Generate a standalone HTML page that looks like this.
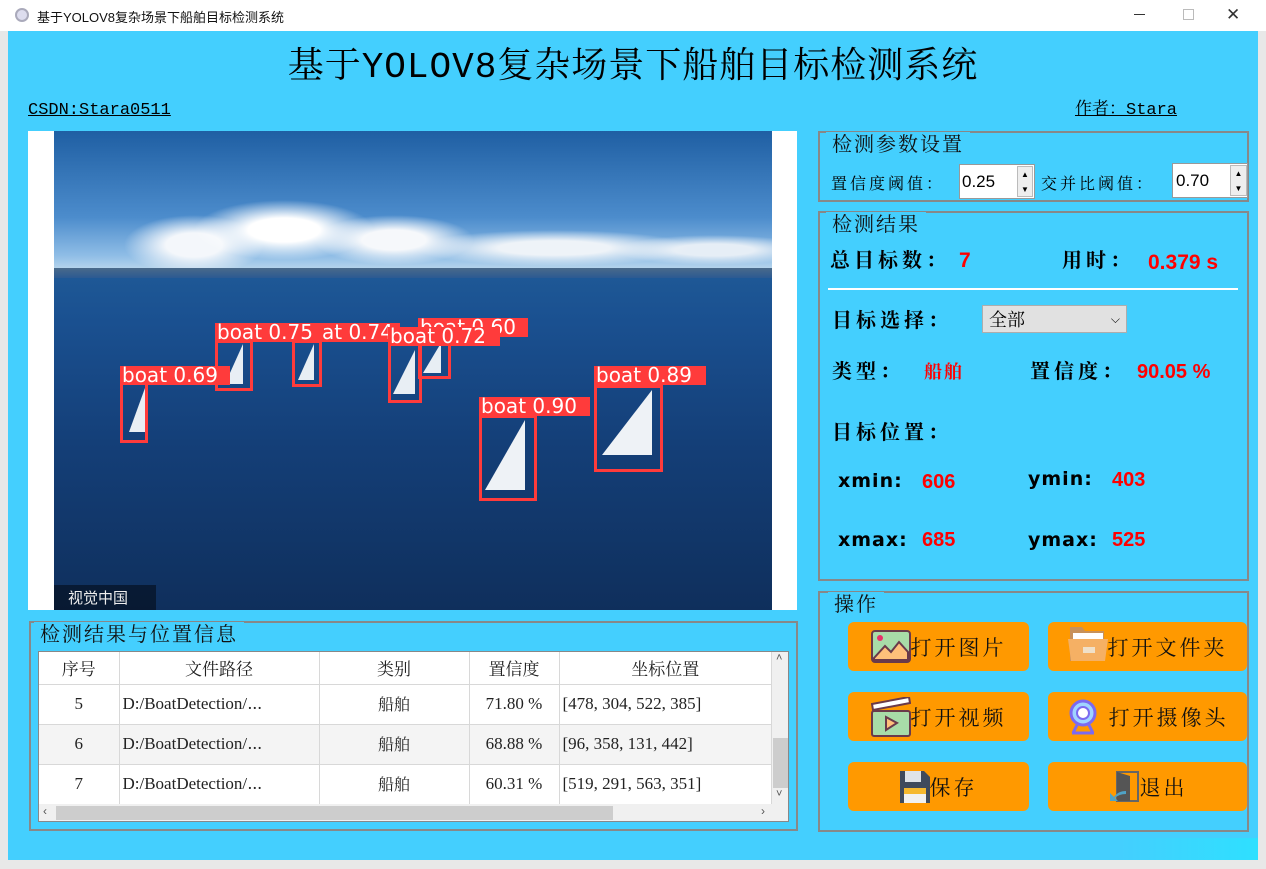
<!DOCTYPE html>
<html><head><meta charset="utf-8"><style>
*{margin:0;padding:0;box-sizing:border-box}
body{width:1266px;height:869px;position:relative;overflow:hidden;background:#e8e8e8;font-family:"Liberation Sans","Noto Serif CJK SC",serif}
.a{position:absolute}
.cj{font-family:"Noto Serif CJK SC","WenQuanYi Zen Hei",serif}
.gb{position:absolute;border:2px solid #888}
.gt{position:absolute;background:#44cffe;padding:0 6px;font-size:20px;line-height:22px;color:#111;letter-spacing:2px}
.btn{position:absolute;background:#ff9900;border-radius:6px;display:flex;align-items:center;justify-content:center;font-size:21px;letter-spacing:3px;color:#111}
.red{color:#ff0000;font-family:"Liberation Sans",sans-serif;font-weight:bold}
.lb{position:absolute;background:#ff3b3b;color:#fff;font:20px "DejaVu Sans",sans-serif;line-height:19px;padding-left:2px;white-space:nowrap;overflow:hidden}
.bx{position:absolute;border:3px solid #ff3b3b}
table{border-collapse:collapse;font-family:"Liberation Serif","Noto Serif CJK SC",serif;font-size:17px;color:#222;table-layout:fixed}
td{border:1px solid #d8d8d8;height:40px;text-align:center;line-height:20px;padding:0;overflow:hidden;white-space:nowrap}
</style></head><body>
<div class="a" style="left:0;top:0;width:1266px;height:31px;background:#fff"></div>
<div class="a" style="left:15px;top:8px;width:14px;height:14px;border-radius:50%;border:2px solid #aab;background:#dde"></div>
<div class="a" style="left:37px;top:7px;font-size:13px;color:#111;font-family:'Liberation Sans','Noto Sans CJK SC',sans-serif">基于YOLOV8复杂场景下船舶目标检测系统</div>
<div class="a" style="left:1134px;top:14px;width:11px;height:1px;background:#333"></div>
<div class="a" style="left:1183px;top:9px;width:11px;height:11px;border:1px solid #bbb"></div>
<div class="a" style="left:1226px;top:5px;font-size:17px;color:#333">✕</div>
<div class="a" style="left:8px;top:31px;width:1250px;height:829px;background:#44cffe"></div>
<div class="a cj" style="left:0;width:1266px;top:44px;text-align:center;font-size:36px;line-height:48px;color:#000;font-family:'Liberation Mono','Noto Serif CJK SC',serif;letter-spacing:1px">基于YOLOV8复杂场景下船舶目标检测系统</div>
<div class="a" style="left:28px;top:101px;font:17px 'Liberation Mono',monospace;line-height:20px;text-decoration:underline;color:#000">CSDN:Stara0511</div>
<div class="a" style="left:1075px;top:101px;font:17px 'Liberation Mono','Noto Serif CJK SC',monospace;line-height:20px;text-decoration:underline;color:#000">作者：Stara</div>
<div class="a" style="left:28px;top:131px;width:769px;height:479px;background:#fff"></div>
<div class="a" style="left:54px;top:131px;width:718px;height:479px;background:linear-gradient(#1f5fa3 0%,#4c8ccc 18%,#8fbde6 26%,#b9d6ec 29%,#4a78a8 29.5%,#1e5896 30.5%,#1a5090 40%,#143f78 65%,#0f2f5c 100%)"></div>
<div class="a" style="left:54px;top:190px;width:718px;height:80px;background:radial-gradient(ellipse 90px 30px at 230px 40px,#fff 40%,transparent 100%),radial-gradient(ellipse 70px 30px at 140px 55px,#f4f7fb 40%,transparent 100%),radial-gradient(ellipse 80px 25px at 340px 50px,#f6f8fb 40%,transparent 100%),radial-gradient(ellipse 140px 18px at 500px 58px,#eef3f8 40%,transparent 100%),radial-gradient(ellipse 100px 15px at 660px 60px,#e6eef6 40%,transparent 100%)"></div>
<div class="a" style="left:54px;top:268px;width:718px;height:10px;background:linear-gradient(#4a6a8a,#2b5a92)"></div>
<div class="a" style="left:54px;top:585px;width:102px;height:25px;background:rgba(0,0,0,.45);color:#eee;font:15px 'Noto Sans CJK SC',sans-serif;line-height:25px;padding-left:14px">视觉中国</div>
<div class="bx" style="left:120px;top:382px;width:28px;height:61px"></div>
<div class="bx" style="left:215px;top:340px;width:38px;height:51px"></div>
<div class="bx" style="left:292px;top:340px;width:30px;height:47px"></div>
<div class="bx" style="left:388px;top:343px;width:34px;height:60px"></div>
<div class="bx" style="left:418px;top:338px;width:33px;height:41px"></div>
<div class="bx" style="left:479px;top:415px;width:58px;height:86px"></div>
<div class="bx" style="left:594px;top:385px;width:69px;height:87px"></div>
<div class="a" style="left:129px;top:388px;width:0;height:0;border-left:16px solid transparent;border-bottom:44px solid #e8eef4"></div>
<div class="a" style="left:225px;top:344px;width:0;height:0;border-left:18px solid transparent;border-bottom:40px solid #e8eef4"></div>
<div class="a" style="left:298px;top:344px;width:0;height:0;border-left:16px solid transparent;border-bottom:36px solid #e8eef4"></div>
<div class="a" style="left:393px;top:350px;width:0;height:0;border-left:22px solid transparent;border-bottom:44px solid #e8eef4"></div>
<div class="a" style="left:423px;top:343px;width:0;height:0;border-left:18px solid transparent;border-bottom:30px solid #e8eef4"></div>
<div class="a" style="left:485px;top:420px;width:0;height:0;border-left:40px solid transparent;border-bottom:70px solid #eef2f6"></div>
<div class="a" style="left:602px;top:390px;width:0;height:0;border-left:50px solid transparent;border-bottom:65px solid #eef2f6"></div>
<div class="lb" style="left:320px;top:323px;width:80px">at 0.74</div>
<div class="lb" style="left:215px;top:323px;width:108px">boat 0.75</div>
<div class="lb" style="left:418px;top:318px;width:110px">boat 0.60</div>
<div class="lb" style="left:388px;top:327px;width:112px">boat 0.72</div>
<div class="lb" style="left:120px;top:366px;width:110px">boat 0.69</div>
<div class="lb" style="left:479px;top:397px;width:111px">boat 0.90</div>
<div class="lb" style="left:594px;top:366px;width:112px">boat 0.89</div>
<div class="gb" style="left:29px;top:621px;width:769px;height:210px"></div>
<div class="gt cj" style="left:34px;top:622px">检测结果与位置信息</div>
<div class="a" style="left:38px;top:651px;width:751px;height:171px;background:#fff;border:1px solid #888;overflow:hidden">
<table style="position:absolute;left:0;top:0;width:733px">
<colgroup><col style="width:80px"><col style="width:200px"><col style="width:150px"><col style="width:90px"><col></colgroup>
<tr><td style="height:32px;border-top:0;border-left:0" class="cj">序号</td><td style="height:32px;border-top:0" class="cj">文件路径</td><td style="height:32px;border-top:0" class="cj">类别</td><td style="height:32px;border-top:0" class="cj">置信度</td><td style="height:32px;border-top:0" class="cj">坐标位置</td></tr>
<tr><td style="border-left:0">5</td><td style="text-align:left;padding-left:3px">D:/BoatDetection/⋯</td><td class="cj" style="font-size:16px">船舶</td><td>71.80 %</td><td style="text-align:left;padding-left:3px">[478, 304, 522, 385]</td></tr>
<tr style="background:#f4f4f4"><td style="border-left:0">6</td><td style="text-align:left;padding-left:3px">D:/BoatDetection/⋯</td><td class="cj" style="font-size:16px">船舶</td><td>68.88 %</td><td style="text-align:left;padding-left:3px">[96, 358, 131, 442]</td></tr>
<tr><td style="border-left:0">7</td><td style="text-align:left;padding-left:3px">D:/BoatDetection/⋯</td><td class="cj" style="font-size:16px">船舶</td><td>60.31 %</td><td style="text-align:left;padding-left:3px">[519, 291, 563, 351]</td></tr>
</table>
<div class="a" style="left:733px;top:0;width:17px;height:152px;background:#f0f0f0"></div>
<div class="a" style="left:734px;top:86px;width:15px;height:50px;background:#cdcdcd"></div>
<div class="a" style="left:737px;top:0;font-size:11px;color:#555">˄</div>
<div class="a" style="left:737px;top:136px;font-size:11px;color:#555">˅</div>
<div class="a" style="left:0;top:152px;width:750px;height:18px;background:#f0f0f0"></div>
<div class="a" style="left:17px;top:154px;width:557px;height:14px;background:#cdcdcd"></div>
<div class="a" style="left:4px;top:152px;font-size:12px;color:#555">‹</div>
<div class="a" style="left:722px;top:152px;font-size:12px;color:#555">›</div>
</div>
<div class="gb" style="left:818px;top:131px;width:431px;height:71px"></div>
<div class="gt cj" style="left:826px;top:132px">检测参数设置</div>
<div class="a cj" style="left:831px;top:172px;font-size:16px;letter-spacing:3px;line-height:22px">置信度阈值：</div>
<div class="a" style="left:959px;top:164px;width:76px;height:35px;background:#fff;border:1px solid #999;font-size:17px;line-height:33px;padding-left:2px">0.25</div>
<div class="a" style="left:1017px;top:166px;width:16px;height:31px;background:#eee;border:1px solid #bbb;font-size:8px;text-align:center;line-height:15px">▲<br>▼</div>
<div class="a cj" style="left:1041px;top:172px;font-size:16px;letter-spacing:3px;line-height:22px">交并比阈值：</div>
<div class="a" style="left:1172px;top:163px;width:76px;height:35px;background:#fff;border:1px solid #999;font-size:17px;line-height:33px;padding-left:3px">0.70</div>
<div class="a" style="left:1230px;top:165px;width:17px;height:31px;background:#eee;border:1px solid #bbb;font-size:8px;text-align:center;line-height:15px">▲<br>▼</div>
<div class="gb" style="left:818px;top:211px;width:431px;height:370px"></div>
<div class="gt cj" style="left:826px;top:212px">检测结果</div>
<div class="a cj" style="left:830px;top:246px;font-size:20px;font-weight:bold;letter-spacing:4px;line-height:26px">总目标数：</div>
<div class="a red" style="left:959px;top:249px;font-size:21px">7</div>
<div class="a cj" style="left:1062px;top:246px;font-size:20px;font-weight:bold;letter-spacing:4px;line-height:26px">用时：</div>
<div class="a red" style="left:1148px;top:251px;font-size:21px">0.379 s</div>
<div class="a" style="left:828px;top:288px;width:410px;height:2px;background:#fff"></div>
<div class="a cj" style="left:832px;top:306px;font-size:20px;font-weight:bold;letter-spacing:4px;line-height:26px">目标选择：</div>
<div class="a" style="left:982px;top:305px;width:145px;height:28px;background:#e1e1e1;border:1px solid #adadad;font-size:18px;line-height:26px;padding-left:6px"><span class="cj">全部</span><span style="position:absolute;right:6px;top:0;font-size:12px">⌵</span></div>
<div class="a cj" style="left:832px;top:357px;font-size:20px;font-weight:bold;letter-spacing:4px;line-height:26px">类型：</div>
<div class="a cj" style="left:924px;top:359px;font-size:18px;color:#f00;font-weight:bold;letter-spacing:2px;line-height:24px">船舶</div>
<div class="a cj" style="left:1030px;top:357px;font-size:20px;font-weight:bold;letter-spacing:4px;line-height:26px">置信度：</div>
<div class="a red" style="left:1137px;top:361px;font-size:20px">90.05 %</div>
<div class="a cj" style="left:832px;top:418px;font-size:20px;font-weight:bold;letter-spacing:4px;line-height:26px">目标位置：</div>
<div class="a" style="left:838px;top:470px;font:bold 19px 'DejaVu Sans',sans-serif;letter-spacing:1px">xmin:</div>
<div class="a red" style="left:922px;top:471px;font-size:20px">606</div>
<div class="a" style="left:1028px;top:468px;font:bold 19px 'DejaVu Sans',sans-serif;letter-spacing:1px">ymin:</div>
<div class="a red" style="left:1112px;top:469px;font-size:20px">403</div>
<div class="a" style="left:838px;top:529px;font:bold 19px 'DejaVu Sans',sans-serif;letter-spacing:1px">xmax:</div>
<div class="a red" style="left:922px;top:529px;font-size:20px">685</div>
<div class="a" style="left:1028px;top:529px;font:bold 19px 'DejaVu Sans',sans-serif;letter-spacing:1px">ymax:</div>
<div class="a red" style="left:1112px;top:529px;font-size:20px">525</div>
<div class="gb" style="left:818px;top:591px;width:431px;height:241px"></div>
<div class="gt cj" style="left:828px;top:592px">操作</div>
<div class="btn cj" style="left:848px;top:622px;width:181px;height:49px">
<svg width="40" height="34" viewBox="0 0 40 34"><rect x="1" y="1" width="38" height="31" rx="3" fill="#a8dca8" stroke="#6a3a4a" stroke-width="2"/><path d="M3 28 L14 16 L20 22 L28 12 L37 22 L37 30 L3 30Z" fill="#ffc07a" stroke="#6a3a4a" stroke-width="2"/><circle cx="9" cy="8" r="3" fill="#e8306a"/></svg>打开图片</div>
<div class="btn cj" style="left:1048px;top:622px;width:199px;height:49px">
<svg width="40" height="40" viewBox="0 0 40 40" style="margin-top:-8px"><path d="M2 4 H14 L17 8 H36 V38 H2Z" fill="#c8915a"/><rect x="5" y="10" width="30" height="14" fill="#fff"/><path d="M0 16 H40 L37 38 H3Z" fill="#f5b064"/><rect x="15" y="24" width="12" height="6" fill="#f0e0c8"/></svg>打开文件夹</div>
<div class="btn cj" style="left:848px;top:692px;width:181px;height:49px">
<svg width="40" height="40" viewBox="0 0 40 40"><path d="M1 7 L38 0 L39 6 L2 13Z" fill="#fff" stroke="#6a3a4a" stroke-width="2"/><rect x="1" y="14" width="38" height="25" rx="2" fill="#a8dca8" stroke="#6a3a4a" stroke-width="2"/><path d="M15 20 L26 26 L15 33Z" fill="#ffc07a" stroke="#6a3a4a" stroke-width="2"/></svg>打开视频</div>
<div class="btn cj" style="left:1048px;top:692px;width:199px;height:49px">
<svg width="34" height="36" viewBox="0 0 34 36"><circle cx="17" cy="14" r="12" fill="#9fd4ff" stroke="#7b6af0" stroke-width="3"/><circle cx="17" cy="14" r="6" fill="#fff" stroke="#7b6af0" stroke-width="2"/><path d="M11 26 L7 34 M23 26 L27 34 M6 34 H28" stroke="#7b6af0" stroke-width="3"/></svg>&nbsp;打开摄像头</div>
<div class="btn cj" style="left:848px;top:762px;width:181px;height:49px">
<svg width="30" height="32" viewBox="0 0 30 32"><path d="M0 0 H24 L30 6 V32 H0Z" fill="#3f4a5c"/><rect x="5" y="0" width="16" height="11" fill="#dfe3e8"/><rect x="4" y="17" width="22" height="15" fill="#f0f0f0"/><rect x="4" y="17" width="22" height="6" fill="#f5b82e"/></svg>保存</div>
<div class="btn cj" style="left:1048px;top:762px;width:199px;height:49px">
<svg width="32" height="32" viewBox="0 0 32 32"><rect x="9" y="1" width="21" height="29" fill="none" stroke="#666" stroke-width="2"/><path d="M9 1 L22 5 V30 L9 30Z" fill="#555"/><path d="M18 20 Q10 20 6 26 L2 22 V30 H10 L7 27 Q11 23 18 23Z" fill="#4fa3c7"/></svg>退出</div>
<div class="a" style="left:1120px;top:838px;width:138px;height:22px;background:linear-gradient(90deg,#44cffe,#2ee0ff)"></div>
</body></html>
